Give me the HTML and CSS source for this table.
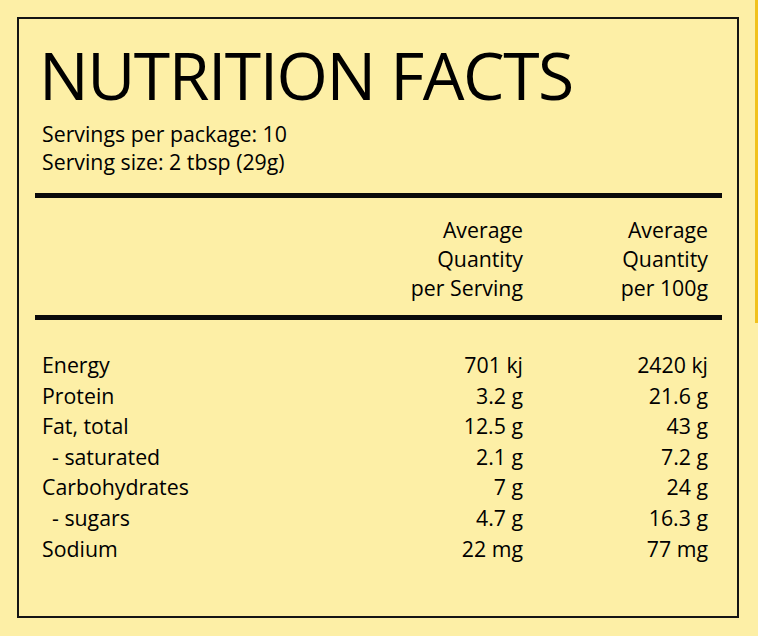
FILE: index.html
```html
<!DOCTYPE html>
<html>
<head>
<meta charset="utf-8">
<link rel="stylesheet" href="styles.css">
</head>
<body>
<div class="label">
  <h1 class="title">NUTRITION FACTS</h1>
  <div class="servings">
    <div>Servings per package: 10</div>
    <div>Serving size: 2 tbsp (29g)</div>
  </div>
  <div class="rule rule-top"></div>
  <div class="head">
    <div class="head-col">Average<br>Quantity<br>per Serving</div>
    <div class="head-col">Average<br>Quantity<br>per 100g</div>
  </div>
  <div class="rule rule-mid"></div>
  <div class="rows">
    <div class="name">Energy</div><div class="v">701 kj</div><div class="v">2420 kj</div>
    <div class="name">Protein</div><div class="v">3.2 g</div><div class="v">21.6 g</div>
    <div class="name">Fat, total</div><div class="v">12.5 g</div><div class="v">43 g</div>
    <div class="name sub">- saturated</div><div class="v">2.1 g</div><div class="v">7.2 g</div>
    <div class="name">Carbohydrates</div><div class="v">7 g</div><div class="v">24 g</div>
    <div class="name sub">- sugars</div><div class="v">4.7 g</div><div class="v">16.3 g</div>
    <div class="name">Sodium</div><div class="v">22 mg</div><div class="v">77 mg</div>
  </div>
</div>
<div class="thumb"></div>
</body>
</html>
```
FILE: styles.css
```css
html, body {
  margin: 0;
  padding: 0;
}
body {
  background: #fdefa6;
  font-family: "Open Sans", "Noto Sans", sans-serif;
  color: #000;
  width: 758px;
  height: 636px;
  overflow: hidden;
  position: relative;
}
.label {
  box-sizing: border-box;
  margin: 17px 0 0 17px;
  width: 722px;
  height: 601px;
  border: 2px solid #141414;
  padding: 0 15px 0 16px;
}
.title {
  margin: 0;
  padding: 22px 0 0 4px;
  font-weight: 400;
  font-size: 66px;
  line-height: 66px;
  letter-spacing: -1.5px;
}
.servings {
  margin-top: 13px;
  padding-left: 7px;
  font-size: 21.3px;
  line-height: 28px;
}
.rule {
  height: 5px;
  background: #0a0a0a;
}
.rule-top {
  margin-top: 17px;
}
.head {
  margin-top: 17px;
  display: grid;
  grid-template-columns: 1fr 185px 185px;
  padding-right: 14px;
  font-size: 21.3px;
  line-height: 29px;
}
.head-col {
  text-align: right;
}
.head-col:first-child {
  grid-column: 2;
}
.rule-mid {
  margin-top: 13px;
}
.rows {
  margin-top: 30px;
  display: grid;
  grid-template-columns: 1fr 185px 185px;
  padding: 0 14px 0 7px;
  font-size: 21.3px;
  line-height: 30.6px;
}
.v {
  text-align: right;
}
.sub {
  padding-left: 10px;
}
.thumb {
  position: absolute;
  right: 0;
  top: 0;
  width: 3px;
  height: 323px;
  background: #f1c11d;
}
```
